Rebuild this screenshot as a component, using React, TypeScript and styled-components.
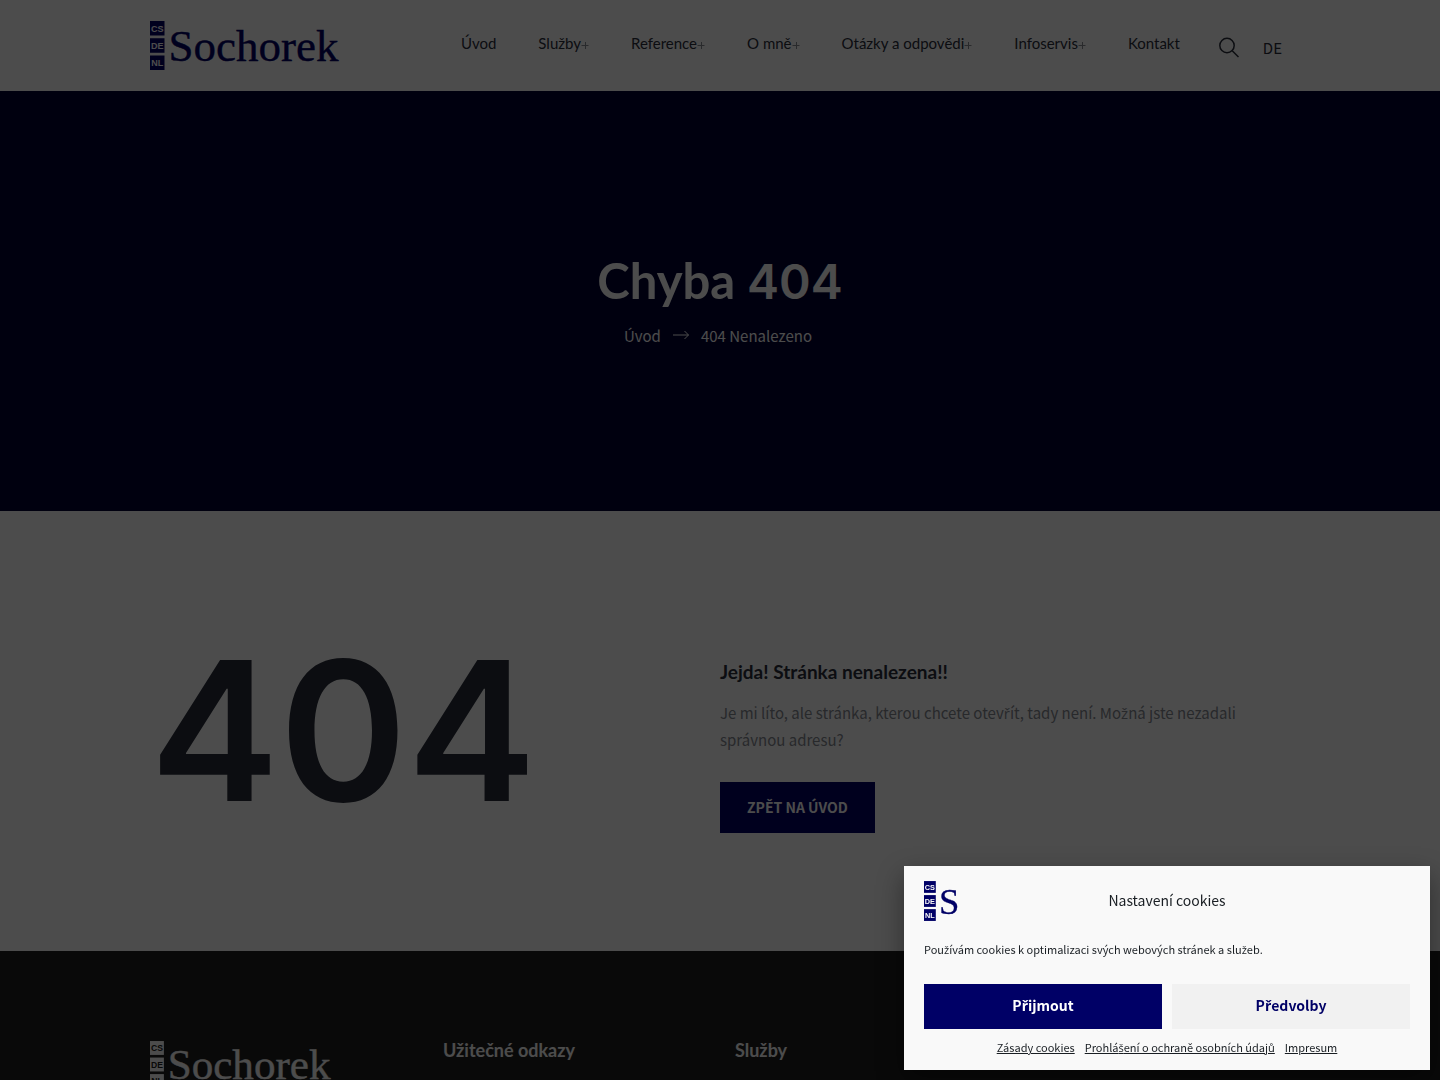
import React from "react";
import styled, { createGlobalStyle } from "styled-components";

const body = `"Noto Sans CJK JP", "Noto Sans", sans-serif`;
const heading = `Lato, "Open Sans", sans-serif`;
const numeral = `Inter, "Liberation Sans", sans-serif`;
const navy = "#000066";

const GlobalStyle = createGlobalStyle`
  *, *::before, *::after { box-sizing: border-box; }
  body {
    margin: 0;
    height: 100vh;
    overflow: hidden;
    background: #fff;
    color: #2a2e3b;
    font-family: ${body};
    font-size: 15px;
    line-height: 27px;
  }
  a { color: inherit; text-decoration: none; }
  h1, h2, h3, p, ul { margin: 0; padding: 0; }
  button { font-family: inherit; cursor: pointer; }
`;

const Container = styled.div`
  width: 100%;
  max-width: 1140px;
  margin: 0 auto;
`;

const Header = styled.header`
  background: #fff;
`;

const HeaderBar = styled(Container)`
  display: flex;
  align-items: center;
  padding: 21px 8px 21px 0;
`;

const LogoLink = styled.a`
  display: block;
  flex: none;
  line-height: 0;
`;

const Nav = styled.nav`
  margin-left: auto;
  padding-bottom: 5px;
`;

const NavList = styled.ul`
  display: flex;
  gap: 42px;
  list-style: none;
  font-family: ${heading};
  font-size: 15px;
`;

const NavLink = styled.a`
  display: flex;
  align-items: center;
`;

const Plus = styled.svg`
  width: 8px;
  height: 8px;
  margin-top: 3px;
  stroke: #8a8c94;
`;

const Tools = styled.div`
  display: flex;
  align-items: center;
  gap: 24px;
  margin-left: 39px;
  padding-top: 3px;
`;

const SearchButton = styled.button`
  display: flex;
  padding: 0;
  border: 0;
  background: none;
  color: inherit;
`;

const Hero = styled.section`
  display: flex;
  flex-direction: column;
  align-items: center;
  justify-content: center;
  gap: 10px;
  min-height: 420px;
  padding: 0 0 4px;
  background: #000033;
  color: #fff;
`;

const HeroTitle = styled.h1`
  font-family: ${heading};
  font-size: 49px;
  font-weight: 700;
  line-height: 60px;
`;

const Numeral = styled.span`
  font-family: ${numeral};
  font-size: 48px;
  font-weight: 600;
`;

const Breadcrumb = styled.nav`
  display: flex;
  align-items: center;
  gap: 12px;
  padding-right: 4px;
`;

const Missing = styled(Container)`
  display: grid;
  grid-template-columns: 1fr 1fr;
  align-items: center;
  min-height: 440px;
`;

const BigCode = styled.h2`
  font-family: ${numeral};
  font-size: 194px;
  font-weight: 600;
  line-height: 200px;
`;

const Message = styled.div`
  padding-top: 28px;
`;

const MessageTitle = styled.h3`
  margin-bottom: 13px;
  font-family: ${heading};
  font-size: 19px;
  font-weight: 700;
  line-height: 28px;
`;

const MessageText = styled.p`
  margin-bottom: 29px;
  color: #868a92;
`;

const HomeLink = styled.a`
  display: inline-block;
  padding: 12px 27px;
  background: ${navy};
  color: #fff;
  font-size: 14px;
  font-weight: 700;
`;

const Footer = styled.footer`
  background: #202020;
  color: #fff;
`;

const FooterGrid = styled(Container)`
  display: grid;
  grid-template-columns: 293px 292px 1fr;
  padding: 90px 0;
`;

const FooterTitle = styled.h3`
  font-family: ${heading};
  font-size: 18px;
  font-weight: 700;
  line-height: 18px;
`;

const Backdrop = styled.div`
  position: fixed;
  inset: 0;
  background: rgba(0, 0, 0, 0.7);
`;

const CookieDialog = styled.section`
  position: fixed;
  right: 10px;
  bottom: 10px;
  display: grid;
  gap: 10px;
  width: 526px;
  max-width: calc(100vw - 20px);
  padding: 15px 20px 10px;
  background: #f9f9f9;
  color: #191e23;
  box-shadow: 0 10px 25px rgba(0, 0, 0, 0.4);
  font-size: 11px;
`;

const CookieHead = styled.div`
  display: grid;
  grid-template-columns: 1fr auto 1fr;
  align-items: center;
  line-height: 0;
`;

const CookieTitle = styled.h2`
  padding-bottom: 2px;
  font-size: 14px;
  font-weight: 400;
  line-height: 20px;
`;

const CookieText = styled.p`
  padding: 7px 0 9px;
  line-height: 22px;
`;

const CookieActions = styled.div`
  display: grid;
  grid-template-columns: 1fr 1fr;
  gap: 10px;
  padding-top: 5px;
`;

const CookieButton = styled.button<{ $primary?: boolean }>`
  height: 45px;
  padding: 0 10px 4px;
  border: 0;
  background: ${(p) => (p.$primary ? navy : "#f1f1f1")};
  color: ${(p) => (p.$primary ? "#fff" : navy)};
  font-size: 14px;
  font-weight: 700;
  line-height: 20px;
`;

const CookieLinks = styled.div`
  display: flex;
  justify-content: center;
  gap: 10px;
  line-height: 17px;
  padding-bottom: 4px;

  a { text-decoration: underline; }
`;

const CaronLetter = styled.span`
  font-family: "Open Sans", "Noto Sans", sans-serif;
  line-height: 1;
`;

/* The body face has no composed ř, š or ž, so those letters come from a face that has them. */
function Czech({ text }: { text: string }) {
  return (
    <span>
      {text.split(/([řšž]+)/).map((part, i) =>
        i % 2 ? <CaronLetter key={i}>{part}</CaronLetter> : part,
      )}
    </span>
  );
}

type LogoProps = { word: string; box: number; height: number; color: string; knock: string };

function Logo({ word, box, height, color, knock }: LogoProps) {
  return (
    <svg
      width={Math.round((box * height) / 49)}
      height={height}
      viewBox={`0 0 ${box} 49`}
      role="img"
      aria-label="Sochorek"
    >
      {["CS", "DE", "NL"].map((code, i) => (
        <g key={code}>
          <rect x="0" y={i * 17.25} width="14.5" height="14.5" fill={color} />
          <text
            x="7.25"
            y={i * 17.25 + 10.5}
            textAnchor="middle"
            fontFamily="Liberation Sans, sans-serif"
            fontWeight="700"
            fontSize="9"
            fill={knock}
          >
            {code}
          </text>
        </g>
      ))}
      <text
        x="18.5"
        y="40"
        fontFamily="Liberation Serif, serif"
        fontSize="45"
        fill={color}
        stroke={color}
        strokeWidth="0.4"
      >
        {word}
      </text>
    </svg>
  );
}

const links = [
  { label: "Úvod" },
  { label: "Služby", more: true },
  { label: "Reference", more: true },
  { label: "O mně", more: true },
  { label: "Otázky a odpovědi", more: true },
  { label: "Infoservis", more: true },
  { label: "Kontakt" },
];

export default function App() {
  return (
    <>
      <GlobalStyle />
      <Header>
        <HeaderBar>
          <LogoLink href="#">
            <Logo word="Sochorek" box={190} height={49} color={navy} knock="#fff" />
          </LogoLink>
          <Nav aria-label="Hlavní menu">
            <NavList>
              {links.map((l) => (
                <li key={l.label}>
                  <NavLink href="#">
                    {l.label}
                    {l.more && (
                      <Plus viewBox="0 0 8 8" aria-hidden="true">
                        <path d="M0.5 4.5h7M4.5 1v7" />
                      </Plus>
                    )}
                  </NavLink>
                </li>
              ))}
            </NavList>
          </Nav>
          <Tools>
            <SearchButton aria-label="Hledat">
              <svg width="20" height="21" viewBox="0 0 20 21" fill="none" stroke="currentColor" strokeWidth="1.5">
                <circle cx="8" cy="8.5" r="7.2" />
                <path d="M13.2 13.7l6.3 6.3" />
              </svg>
            </SearchButton>
            <a href="#">DE</a>
          </Tools>
        </HeaderBar>
      </Header>

      <Hero>
        <HeroTitle>
          Chyba <Numeral>404</Numeral>
        </HeroTitle>
        <Breadcrumb aria-label="Drobečková navigace">
          <a href="#">Úvod</a>
          <svg width="16" height="10" viewBox="0 0 16 10" fill="none" stroke="currentColor" aria-hidden="true">
            <path d="M0 5h15.5M11.5 1l4 4-4 4" />
          </svg>
          <span>404 Nenalezeno</span>
        </Breadcrumb>
      </Hero>

      <Missing as="main">
        <BigCode>404</BigCode>
        <Message>
          <MessageTitle>Jejda! Stránka nenalezena!!</MessageTitle>
          <MessageText>
            <Czech text="Je mi líto, ale stránka, kterou chcete otevřít, tady není. Možná jste nezadali správnou adresu?" />
          </MessageText>
          <HomeLink href="#">ZPĚT NA ÚVOD</HomeLink>
        </Message>
      </Missing>

      <Footer>
        <FooterGrid>
          <LogoLink href="#">
            <Logo word="Sochorek" box={190} height={47} color="#fff" knock="#202020" />
          </LogoLink>
          <FooterTitle>Užitečné odkazy</FooterTitle>
          <FooterTitle>Služby</FooterTitle>
        </FooterGrid>
      </Footer>

      <Backdrop />
      <CookieDialog role="dialog" aria-labelledby="cookie-title">
        <CookieHead>
          <Logo word="S" box={43} height={40} color={navy} knock="#f9f9f9" />
          <CookieTitle id="cookie-title">Nastavení cookies</CookieTitle>
        </CookieHead>
        <CookieText>
          <Czech text="Používám cookies k optimalizaci svých webových stránek a služeb." />
        </CookieText>
        <CookieActions>
          <CookieButton $primary>
            <Czech text="Přijmout" />
          </CookieButton>
          <CookieButton>
            <Czech text="Předvolby" />
          </CookieButton>
        </CookieActions>
        <CookieLinks>
          <a href="#">Zásady cookies</a>
          <a href="#">
            <Czech text="Prohlášení o ochraně osobních údajů" />
          </a>
          <a href="#">Impresum</a>
        </CookieLinks>
      </CookieDialog>
    </>
  );
}
